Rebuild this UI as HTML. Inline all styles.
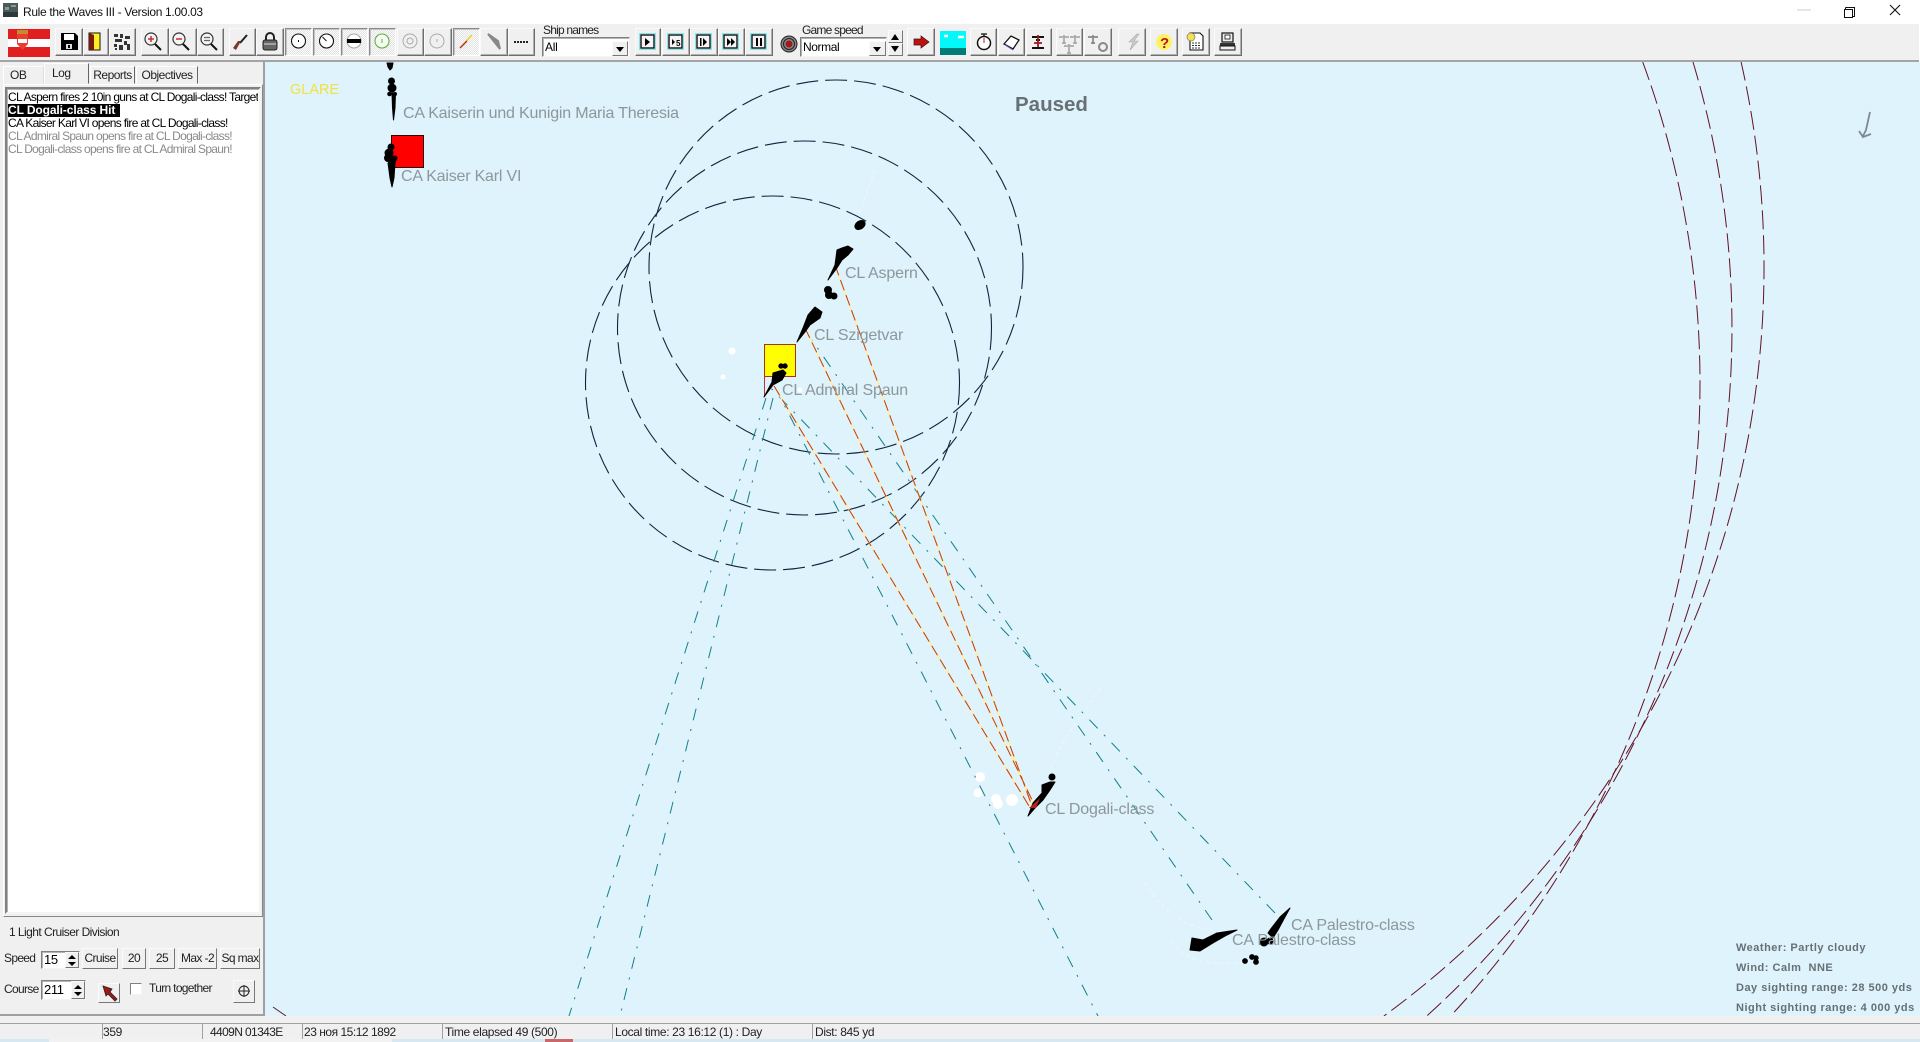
<!DOCTYPE html>
<html><head><meta charset="utf-8"><title>Rule the Waves III</title>
<style>
html,body{margin:0;padding:0;width:1920px;height:1042px;overflow:hidden;background:#fff}
body{position:relative;font-family:"Liberation Sans",sans-serif;font-size:12px;color:#000}
div{position:absolute;box-sizing:border-box;white-space:nowrap}
.b{top:28px;height:28px;background:#f0f0f0;border:1px solid;border-color:#fbfbfb #6e6e6e #6e6e6e #fbfbfb;box-shadow:inset -1px -1px #b0b0b0}
.t{background:repeating-conic-gradient(#fbfbfb 0 25%,#e4e4e4 0 50%) 0 0/2px 2px;border-color:#8a8a8a #fff #fff #8a8a8a;box-shadow:inset 1px 1px #c4c4c4}
.c{background:#fff;border:1px solid;border-color:#808080 #f4f4f4 #f4f4f4 #808080;box-shadow:inset 1px 1px #b4b4b4}
.s{top:1023px;height:16px;border-top:1px solid #a0a0a0;border-left:1px solid #a0a0a0;line-height:16px;padding-left:2px;letter-spacing:-.35px;font-size:12px;color:#222}
.p{background:#f0f0f0;border:1px solid;border-color:#fbfbfb #777 #777 #fbfbfb;text-align:center;line-height:19px;letter-spacing:-.6px;color:#222}
.w{left:1736px;color:#667075;font-weight:bold;font-size:11px;line-height:14px;letter-spacing:.5px}
.l{left:8px;line-height:13px;height:13px;letter-spacing:-.68px;font-size:12px}
.tab{background:#f0f0f0;border:1px solid;border-color:#fff #666 #f0f0f0 #fff;text-align:center;letter-spacing:-.5px;line-height:17px;color:#222}
</style></head><body>

<div style="left:0;top:0;width:1920px;height:24px;background:#fff"></div>
<div style="left:23px;top:4px;line-height:16px;font-size:12px;letter-spacing:-.33px;color:#111">Rule the Waves III - Version 1.00.03</div>
<div style="left:0;top:24px;width:1919px;height:38px;background:#f0f0f0;border-bottom:2px solid #a4a4a4"></div>
<div style="left:0;top:62px;width:1920px;height:954px;background:#def3fb"></div>

<!-- left panel -->
<div style="left:0;top:62px;width:265px;height:954px;background:#f0f0f0;border-right:2px solid #a0a0a0;border-bottom:2px solid #a0a0a0"></div>
<div class="tab" style="left:3px;top:66px;width:41px;height:18px;border-color:#fff #ddd #f0f0f0 #fff;text-align:left;padding-left:6px">OB</div>
<div class="tab" style="left:44px;top:63px;width:45px;height:21px;line-height:19px;z-index:2;text-align:left;padding-left:7px">Log</div>
<div class="tab" style="left:90px;top:66px;width:45px;height:18px">Reports</div>
<div class="tab" style="left:136px;top:66px;width:62px;height:18px">Objectives</div>
<div style="left:3px;top:84px;width:260px;height:833px;border:1px solid #fff;border-right-color:#888;border-bottom-color:#888"></div>
<div class="c" style="left:5px;top:87px;width:256px;height:827px;border-width:2px;overflow:hidden"></div>
<div style="left:8px;top:90px;width:250px;height:72px;overflow:hidden">
<div class="l" style="left:0;top:1px">CL Aspern fires 2 10in guns at CL Dogali-class! Targeting</div>
<div class="l" style="left:0;top:14px;background:#000;color:#fff;font-weight:bold;padding:0 1px 0 0;width:112px;letter-spacing:-.1px;font-size:12px">CL Dogali-class Hit</div>
<div class="l" style="left:0;top:27px">CA Kaiser Karl VI opens fire at CL Dogali-class!</div>
<div class="l" style="left:0;top:40px;color:#8a8a8a">CL Admiral Spaun opens fire at CL Dogali-class!</div>
<div class="l" style="left:0;top:53px;color:#8a8a8a">CL Dogali-class opens fire at CL Admiral Spaun!</div>
</div>

<div class="l" style="left:9px;top:926px;color:#222;letter-spacing:-.55px">1 Light Cruiser Division</div>
<div class="l" style="left:4px;top:952px;color:#222">Speed</div>
<div class="c" style="left:41px;top:951px;width:39px;height:18px;padding-left:2px;line-height:15px;font-size:13px;letter-spacing:-.4px">15</div>
<div class="p" style="left:65px;top:952px;width:14px;height:16px"></div>
<div class="p" style="left:82px;top:948px;width:36px;height:21px">Cruise</div>
<div class="p" style="left:122px;top:948px;width:24px;height:21px">20</div>
<div class="p" style="left:149px;top:948px;width:26px;height:21px">25</div>
<div class="p" style="left:178px;top:948px;width:39px;height:21px">Max -2</div>
<div class="p" style="left:220px;top:948px;width:40px;height:21px">Sq max</div>
<div class="l" style="left:4px;top:983px;color:#222">Course</div>
<div class="c" style="left:41px;top:980px;width:45px;height:20px;padding-left:2px;line-height:18px;font-size:13px;letter-spacing:-.4px">211</div>
<div class="p" style="left:71px;top:981px;width:14px;height:18px"></div>
<div class="p" style="left:98px;top:983px;width:22px;height:20px"></div>
<div class="c" style="left:130px;top:983px;width:12px;height:12px;box-shadow:none"></div>
<div class="l" style="left:149px;top:982px;color:#222">Turn together</div>
<div class="p" style="left:233px;top:980px;width:22px;height:23px"></div>

<!-- toolbar buttons -->
<div class="b" style="left:55px;width:28px"></div><div class="b" style="left:83px;width:26px"></div><div class="b" style="left:109px;width:27px"></div>
<div class="b" style="left:141px;width:28px"></div><div class="b" style="left:169px;width:28px"></div><div class="b" style="left:197px;width:27px"></div>
<div class="b" style="left:229px;width:27px"></div><div class="b" style="left:256px;width:28px"></div>
<div class="b t" style="left:285px;width:27px"></div><div class="b t" style="left:313px;width:27px"></div><div class="b t" style="left:341px;width:27px"></div><div class="b t" style="left:369px;width:27px"></div>
<div class="b" style="left:397px;width:27px"></div><div class="b" style="left:424px;width:28px"></div>
<div class="b t" style="left:453px;width:27px"></div><div class="b" style="left:480px;width:28px"></div><div class="b" style="left:508px;width:27px"></div>
<div style="left:543px;top:24px;font-size:12px;line-height:13px;letter-spacing:-.8px;color:#222">Ship names</div>
<div class="c" style="left:542px;top:37px;width:88px;height:20px;padding-left:2px;line-height:19px;letter-spacing:-.3px">All</div>
<div class="p" style="left:612px;top:41px;width:16px;height:15px"></div>
<div class="b" style="left:635px;width:26px"></div><div class="b" style="left:662px;width:28px"></div><div class="b" style="left:690px;width:28px"></div><div class="b" style="left:718px;width:27px"></div><div class="b" style="left:745px;width:28px"></div>
<div style="left:802px;top:24px;font-size:12px;line-height:13px;letter-spacing:-.8px;color:#222">Game speed</div>
<div class="c" style="left:800px;top:37px;width:87px;height:20px;padding-left:2px;line-height:19px;letter-spacing:-.4px">Normal</div>
<div class="p" style="left:869px;top:41px;width:17px;height:15px"></div>
<div class="p" style="left:888px;top:30px;width:15px;height:13px"></div><div class="p" style="left:888px;top:43px;width:15px;height:13px"></div>
<div class="b" style="left:907px;width:28px"></div>
<div class="b" style="left:970px;width:27px"></div><div class="b" style="left:998px;width:27px"></div><div class="b" style="left:1026px;width:26px"></div>
<div class="b" style="left:1056px;width:27px"></div><div class="b" style="left:1084px;width:28px"></div>
<div class="b" style="left:1118px;width:28px"></div><div class="b" style="left:1150px;width:28px"></div><div class="b" style="left:1182px;width:28px"></div><div class="b" style="left:1214px;width:28px"></div>

<!-- status bar -->
<div style="left:0;top:1016px;width:1920px;height:23px;background:#f0f0f0"></div>
<div class="s" style="left:0;width:102px;border-left:0"></div>
<div class="s" style="left:102px;width:100px;padding-left:0">359</div>
<div class="s" style="left:202px;width:100px;padding-left:7px;letter-spacing:-.62px">4409N 01343E</div>
<div class="s" style="left:302px;width:140px;padding-left:1px;letter-spacing:-.48px">23 ноя 15:12 1892</div>
<div class="s" style="left:442px;width:170px">Time elapsed 49 (500)</div>
<div class="s" style="left:612px;width:200px">Local time: 23 16:12 (1) : Day</div>
<div class="s" style="left:812px;width:1108px">Dist: 845 yd</div>
<div style="left:0;top:1039px;width:1920px;height:3px;background:#d8e8f2"></div>
<div style="left:49px;top:1039px;width:343px;height:3px;background:#f2f2f2"></div>
<div style="left:545px;top:1039px;width:28px;height:3px;background:#c9676b"></div>

<!-- map text -->
<div style="left:290px;top:81px;color:#f2e23e;font-size:14.5px;line-height:18px">GLARE</div>
<div style="left:1015px;top:93px;color:#667075;font-weight:bold;font-size:20.5px;line-height:24px">Paused</div>
<div class="w" style="top:941px">Weather: Partly cloudy</div>
<div class="w" style="top:961px">Wind: Calm &nbsp;NNE</div>
<div class="w" style="top:981px">Day sighting range: 28 500 yds</div>
<div class="w" style="top:1001px">Night sighting range: 4 000 yds</div>

<svg width="1920" height="1042" viewBox="0 0 1920 1042" style="position:absolute;left:0;top:0">
<defs><clipPath id="sea"><rect x="265" y="62" width="1655" height="954"/></clipPath></defs>
<!-- window chrome -->
<rect x="3" y="3" width="15" height="14" fill="#4a5a58"/><path d="M3 12h15v5H3z" fill="#2c3a3c"/><path d="M5 7h4v3H5zM11 5h5v2h-5z" fill="#8a9a98"/>
<path d="M1797 10h14" stroke="#ccc" stroke-width="1"/>
<path d="M1845.500 7.500h9v9h-2M1845.500 7.500v2" fill="none" stroke="#111"/><rect x="1844.500" y="9.500" width="8" height="8" fill="#fff" stroke="#111"/>
<path d="M1890 5l10 10M1900 5l-10 10" stroke="#111" stroke-width="1.1"/>

<g clip-path="url(#sea)">
<!-- wakes -->
<g fill="none" stroke="#ecf8fd" stroke-width="1" stroke-dasharray="4 3">
<path d="M392 120V140M875 170L858 218M845 250L820 305M1100 688C1080 720 1060 740 1050 772M1145 882C1165 920 1200 933 1235 932M1172 940C1185 965 1215 965 1250 962"/>
</g>
<g fill="#fff"><circle cx="732" cy="351" r="3.500"/><circle cx="723" cy="377" r="2.500"/><circle cx="980" cy="777" r="5"/><circle cx="978" cy="793" r="4.500"/><circle cx="996" cy="799" r="5"/><circle cx="998" cy="804" r="5"/><circle cx="1012" cy="800" r="6"/><circle cx="800" cy="390" r="2.500"/></g>
<!-- small range circles -->
<g fill="none" stroke="#10243c" stroke-width="1.100" stroke-dasharray="22 7">
<circle cx="836" cy="267" r="187"/><circle cx="804.500" cy="328" r="187"/><circle cx="772.500" cy="383" r="187"/>
</g>
<!-- big range circles -->
<g fill="none" stroke="#661024" stroke-width="1" stroke-dasharray="19 6">
<path d="M1741.100 62A928 928 0 0 1 1383.900 1016"/><path d="M1693 62A928 928 0 0 1 1426.800 1016"/><path d="M1642.700 62A928 928 0 0 1 1450.600 1016"/>
</g>
<path d="M273 1007L286 1016" stroke="#5c1c2c" stroke-width="1"/>
<!-- teal fire -->
<g fill="none" stroke="#12808a" stroke-width="1" stroke-dasharray="12 9 2 9">
<path d="M1275 913L768 385M1212 920L812 340M775 387L1098 1016M766 398L569 1016M773 398L620 1016"/>
</g>
<!-- orange fire -->
<g fill="none" stroke="#fdeea0" stroke-width="1.600"><path d="M835 265L1032 806M805 328L1033 802M774 386L1029 806"/></g>
<g fill="none" stroke="#c03a1e" stroke-width="1" stroke-dasharray="11 5"><path d="M835 265L1032 806M805 328L1033 802M774 386L1029 806"/></g>
<!-- markers -->
<rect x="391.500" y="135.500" width="32" height="32" fill="#f00" stroke="#3a0000"/>
<rect x="764.500" y="344.500" width="31" height="32" fill="#ffff00" stroke="#a83020"/>
<path d="M764.500 376V397" stroke="#c03030"/>
<!-- ships -->
<g fill="#000" stroke="#000" stroke-width="1" stroke-linejoin="round">
<path d="M387 63h6l-1 5-2 2-2-3z"/>
<circle cx="391.500" cy="81" r="3"/><circle cx="392" cy="88" r="4"/><circle cx="389.500" cy="94" r="1.800"/><circle cx="395" cy="94" r="1.500"/>
<path d="M392 93h3.500L395 108L393.500 120L392.500 108Z"/>
<circle cx="391" cy="147" r="3"/><circle cx="389" cy="153" r="4"/><circle cx="388" cy="158" r="3.500"/><circle cx="392" cy="160" r="4"/><circle cx="395" cy="158" r="2"/>
<path d="M388 163h7L394 178L392 187L390 178Z"/>
<ellipse cx="860" cy="225" rx="5.500" ry="4" transform="rotate(-35 860 225)"/>
<path d="M828 280L835 265L837 250L842 248L848 246L853 249L848 255L842 260L837 268Z"/>
<circle cx="828" cy="290" r="3.500"/><circle cx="829" cy="295" r="3.500"/><circle cx="834" cy="296" r="3"/>
<path d="M797 342L803 328L808 315L815 307L822 312L820 318L810 325L805 332Z"/>
<circle cx="781" cy="366" r="2.200"/><circle cx="785" cy="366" r="2.200"/>
<path d="M764 397L772 382L773 373L783 370L786 373L782 380L773 385Z"/>
<path d="M1028 816L1033 803L1042 793L1042 785L1050 782L1055 782L1050 790L1043 800L1035 808Z"/>
<circle cx="1052" cy="777" r="3"/>
<path d="M1290 908L1280 917L1270 930L1268 933L1273 938L1278 930L1285 917Z"/>
<circle cx="1264" cy="942" r="4"/><circle cx="1270" cy="941" r="3"/>
<circle cx="1245" cy="961" r="2.400"/><circle cx="1252" cy="957" r="2.400"/><circle cx="1256" cy="958" r="2.200"/><circle cx="1256" cy="962" r="2.400"/>
<path d="M1237 930L1217 933L1203 940L1192 938L1190 950L1200 951L1213 943L1227 935Z"/>
</g>
<path d="M1029 808L1040 798L1036 808Z" fill="#b02020"/>
<path d="M1870 112L1866 130L1863 136M1859 131L1863 137L1871 134" fill="none" stroke="#7f8a90" stroke-width="1.800"/>
</g>

<!-- map labels -->
<g font-family="Liberation Sans,sans-serif" font-size="16" fill="#8d979c" letter-spacing="-.15">
<text x="403" y="118" letter-spacing="-.2">CA Kaiserin und Kunigin Maria Theresia</text>
<text x="401" y="181" letter-spacing="-.2">CA Kaiser Karl VI</text>
<text x="845" y="278">CL Aspern</text>
<text x="814" y="340">CL Szigetvar</text>
<text x="782" y="395">CL Admiral Spaun</text>
<text x="1045" y="814">CL Dogali-class</text>
<text x="1291" y="930">CA Palestro-class</text>
<text x="1232" y="945">CA Palestro-class</text>
</g>

<!-- flag -->
<rect x="8" y="29" width="42" height="28" fill="#e02020"/><rect x="8" y="39" width="42" height="8" fill="#fff"/>
<path d="M17 31h11v13l-5.500 6-5.500-6z" fill="#e84030"/><path d="M18 39h9v4h-9z" fill="#fff"/><path d="M17 30h11v4H17z" fill="#c88a30"/>
<!-- save -->
<path d="M61 33h14l3 3v14H61z" fill="#000"/><rect x="64" y="34" width="10" height="6" fill="#fff"/><rect x="66" y="44" width="6" height="5" fill="#ddd"/><rect x="68" y="45" width="2" height="3" fill="#000"/>
<!-- door -->
<rect x="89" y="33" width="11" height="17" fill="#ffee20" stroke="#111"/><path d="M89 33l5 2v15h-5z" fill="#7a1810"/>
<!-- gear pattern -->
<g fill="#333"><rect x="114" y="34" width="4" height="3"/><rect x="120" y="34" width="3" height="4"/><rect x="125" y="36" width="5" height="3"/><rect x="115" y="39" width="7" height="3"/><rect x="124" y="41" width="3" height="4"/><rect x="114" y="44" width="3" height="3"/><rect x="119" y="45" width="4" height="5"/><rect x="127" y="44" width="3" height="6"/><rect x="115" y="48" width="2" height="2"/></g>
<!-- zooms -->
<g fill="#f4f4f4" stroke="#333" stroke-width="1.200"><circle cx="151" cy="39" r="6"/><circle cx="179" cy="39" r="6"/><circle cx="207" cy="39" r="6"/></g>
<g stroke="#111" stroke-width="2"><path d="M155 44l6 6M183 44l6 6M211 44l6 6"/></g>
<path d="M148 39h6M151 36v6M176 39h6" stroke="#c03030" stroke-width="1.500"/><path d="M204 37.500h6M204 40.500h6" stroke="#666" stroke-width="1.300"/>
<!-- gun -->
<path d="M247 35L240 43" stroke="#222" stroke-width="2"/><path d="M241 41L236 50L233 48L238 41Z" fill="#7a3a28"/>
<!-- lock -->
<path d="M266 40v-3a4 4 0 0 1 8 0v3" fill="none" stroke="#222" stroke-width="2"/><rect x="263" y="40" width="14" height="10" rx="2" fill="#666" stroke="#222"/><path d="M264 44h12" stroke="#ddd"/>
<!-- mode circles -->
<g fill="#fff" stroke="#111" stroke-width="1.100"><circle cx="298.500" cy="41" r="7"/><circle cx="326.500" cy="41" r="7"/><circle cx="354" cy="41" r="7" stroke="#aaa"/></g>
<rect x="298" y="40" width="1" height="2" fill="#111"/><path d="M326.500 41l-4-4" stroke="#111"/>
<rect x="347" y="39" width="14" height="4" fill="#000"/>
<circle cx="382" cy="41" r="7" fill="#f6fbf4" stroke="#60b040" stroke-width="1.100"/><path d="M382 39v4" stroke="#60b040"/>
<circle cx="410" cy="41" r="7" fill="none" stroke="#aaa"/><circle cx="410" cy="41" r="3" fill="none" stroke="#aaa"/>
<circle cx="437" cy="41" r="7" fill="none" stroke="#aaa"/><path d="M437 39v3" stroke="#aaa"/>
<path d="M460 48L472 35" stroke="#f0d030" stroke-width="1.500"/><path d="M460 48L467 41" stroke="#b03030" stroke-width="1.300"/>
<path d="M488 34L500 49L498 41Z" fill="#888" stroke="#888" stroke-width="2"/>
<path d="M514 42h14" stroke="#222" stroke-width="2" stroke-dasharray="2 1"/>
<!-- combobox arrows -->
<path d="M616 47h8l-4 5zM873 47h8l-4 5z" fill="#000"/>
<path d="M891 40h8l-4-6zM891 46h8l-4 6z" fill="#000"/>
<!-- spinners -->
<path d="M68 959h8l-4-4zM68 962h8l-4 4z" fill="#000"/>
<path d="M74 989h8l-4-4zM74 992h8l-4 4z" fill="#000"/>
<!-- order arrow, cross -->
<path d="M103 986L112 989L110 992L117 999L115 1001L108 994L106 996Z" fill="#a01818" stroke="#222" stroke-width=".8"/>
<circle cx="244" cy="991" r="5" fill="none" stroke="#222"/><path d="M244 985v12M238 991h12" stroke="#222"/>
<!-- play buttons -->
<g fill="#f4f4f4" stroke="#111" stroke-width="1.400"><rect x="641" y="35" width="13" height="13"/><rect x="669" y="35" width="13" height="13"/><rect x="697" y="35" width="13" height="13"/><rect x="724" y="35" width="13" height="13"/><rect x="752" y="35" width="13" height="13"/></g>
<g fill="none" stroke="#7fe6ea"><rect x="639.500" y="33.500" width="16" height="16"/><rect x="667.500" y="33.500" width="16" height="16"/><rect x="695.500" y="33.500" width="16" height="16"/><rect x="722.500" y="33.500" width="16" height="16"/><rect x="750.500" y="33.500" width="16" height="16"/></g>
<path d="M645 38l5 4-5 4zM672 39l3 3-3 3zM700 38h1.500v8H700zM703 38l4 4-4 4zM727 38l4 4-4 4zM731 38l4 4-4 4zM756 38h2v8h-2zM760 38h2v8h-2z" fill="#000"/>
<text x="676" y="46" font-family="Liberation Sans,sans-serif" font-size="8" font-weight="bold" fill="#000">5</text>
<!-- target -->
<circle cx="789" cy="44" r="8" fill="#888" stroke="#222"/><circle cx="789" cy="44" r="5.500" fill="none" stroke="#222"/><circle cx="789" cy="44" r="3.500" fill="#a01818"/>
<!-- red arrow -->
<path d="M914 39h7v-3l8 6-8 6v-3h-7z" fill="#c01010" stroke="#401010" stroke-width=".7"/>
<!-- sky -->
<rect x="940" y="31" width="26" height="17" fill="#00fafa"/><rect x="940" y="48" width="26" height="7" fill="#007c78"/><path d="M944 36h4M958 37h6" stroke="#fff" stroke-width="2.500"/>
<!-- stopwatch -->
<circle cx="984" cy="43" r="6.500" fill="#fff" stroke="#111" stroke-width="1.500"/><path d="M984 38v5" stroke="#b02020"/><path d="M981 34h6M984 34v3" stroke="#111" stroke-width="1.300"/>
<!-- book -->
<path d="M1004 44l7-8 8 4-6 9z" fill="#fff" stroke="#111" stroke-width="1.300"/><path d="M1005 45l8 5" stroke="#6a6ad0"/>
<!-- anchor-ish -->
<path d="M1032 37h12M1036 40h4M1032 48h12" stroke="#111" stroke-width="2"/><path d="M1038 35v12M1034 43h8" stroke="#a01818" stroke-width="1.800"/>
<!-- planes -->
<g stroke="#aaa" stroke-width="1.700" fill="none"><path d="M1059 37h10M1064 35v9M1062 43h4M1070 37h10M1075 35v9M1073 43h4M1064 46h10M1069 44v10M1067 53h4"/></g>
<path d="M1088 37h10M1093 35v9M1091 43h4" stroke="#888" stroke-width="1.700" fill="none"/><circle cx="1103" cy="47" r="4" fill="none" stroke="#888" stroke-width="2"/>
<!-- lightning -->
<path d="M1137 34l-8 8h4l-3 8 8-9h-4l5-7z" fill="#ccc" stroke="#aaa" stroke-width=".6"/>
<!-- help -->
<circle cx="1164" cy="42" r="8" fill="#fdf264"/>
<text x="1160" y="48" font-family="Liberation Sans,sans-serif" font-size="15" font-weight="bold" fill="#b81818">?</text>
<!-- note -->
<path d="M1190 33h10l3 3v14h-13z" fill="#fff" stroke="#111" stroke-width="1.100"/><circle cx="1191" cy="37" r="4" fill="#f2e050" stroke="#666" stroke-width=".6"/><path d="M1192 43h9M1192 45.500h9M1192 48h9" stroke="#333" stroke-dasharray="2 1"/>
<!-- printer -->
<rect x="1222" y="33" width="11" height="9" fill="#eee" stroke="#111" stroke-width="1.200"/><rect x="1225" y="35" width="5" height="4" fill="#fff" stroke="#111" stroke-width=".8"/><rect x="1220" y="43" width="15" height="3" fill="#333"/><rect x="1220" y="46" width="15" height="4" fill="#eee" stroke="#111"/>
</svg>
</body></html>
